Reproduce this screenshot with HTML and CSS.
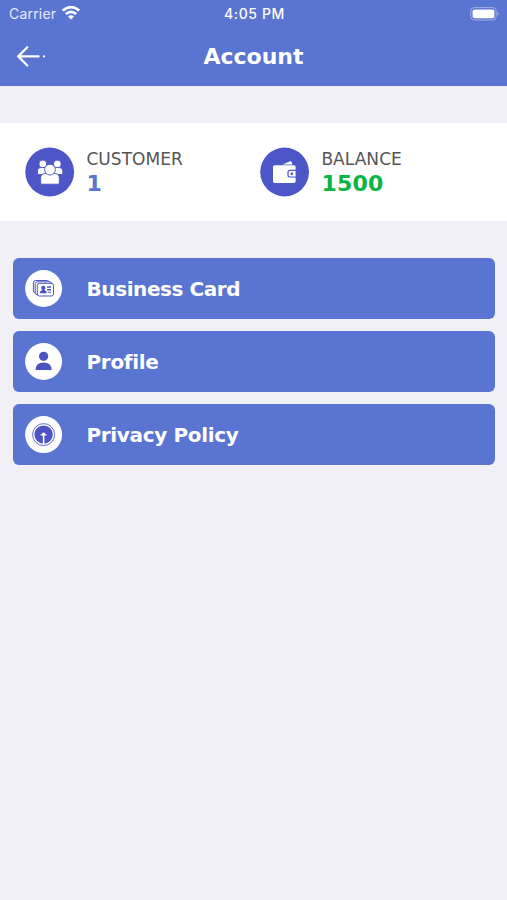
FILE: index.html
```html
<!DOCTYPE html>
<html lang="en">
<head>
<meta charset="utf-8">
<title>Account</title>
<link rel="stylesheet" href="styles.css">
</head>
<body>
<header class="header">
  <div class="status">
    <div class="carrier"><span>Carrier</span>
      <svg class="wifi" width="18" height="14" viewBox="0 0 18 14" fill="none" stroke="#fff" stroke-width="2.6"><path d="M.8 4.6Q9-2.4 17.2 4.6M3.8 8Q9 3.6 14.2 8"/><path d="M9 13.4L6 10.4Q9 8.2 12 10.4Z" fill="#fff" stroke="none"/></svg>
    </div>
    <span class="time">4:05 PM</span>
    <svg class="battery" width="30" height="14" viewBox="0 0 30 14"><rect x=".8" y=".6" width="25.4" height="12.4" rx="3.5" fill="none" stroke="#a3b0e7" stroke-width="1"/><rect x="2.6" y="2.4" width="21.8" height="8.8" rx="1.8" fill="#fff"/><path d="M27.6 4.8Q30 6.8 27.6 8.8Z" fill="#a3b0e7"/></svg>
  </div>
  <nav class="nav">
    <svg class="back" width="32" height="22" viewBox="0 0 32 22" fill="none" stroke="#fff" stroke-width="2.2" stroke-linecap="round" stroke-linejoin="round"><path d="M11.3 1.3L2.2 10.4L11.3 19.5M2.2 10.4H22.6"/><path d="M28 10.4H28.1"/></svg>
    <h1 class="title">Account</h1>
  </nav>
</header>
<main>
  <section class="stats">
    <div class="stat">
      <svg width="50" height="50" viewBox="0 0 50 50"><circle cx="24.7" cy="25" r="24.4" fill="#4c56c6"/><g fill="#fff" stroke="#4c56c6" stroke-width=".9"><circle cx="17.8" cy="17" r="3.9"/><circle cx="32.3" cy="17" r="3.9"/><path d="M12.5 27.5V24Q12.5 20.5 16 20.5H20Q22 21 22 24V27.5Z"/><path d="M28.3 27.5V24Q28.3 21 31 20.5H34.3Q37.8 20.5 37.8 24V27.5Z"/><path d="M15.7 36V31Q15.7 26.5 20 26.5H30Q34.3 26.5 34.3 31V36Q34.3 37.2 33 37.2H17Q15.7 37.2 15.7 36Z"/><circle cx="25" cy="22.6" r="5.4"/></g></svg>
      <div class="figures"><span class="label">CUSTOMER</span><strong class="value">1</strong></div>
    </div>
    <div class="stat">
      <svg width="50" height="50" viewBox="0 0 50 50"><circle cx="24.6" cy="25" r="24.4" fill="#4c56c6"/><path d="M22.5 17.4L30.2 14.2Q31.2 14 31.6 15L32.3 17.4Z" fill="#fff"/><rect x="13" y="18.3" width="22.6" height="17.6" rx="1.6" fill="#fff"/><path d="M36.2 23.4H30Q28 23.4 28 25.4V28Q28 30 30 30H36.2Z" fill="#fff" stroke="#4c56c6" stroke-width="1.2"/><circle cx="31.8" cy="26.8" r="1.4" fill="#4c56c6"/></svg>
      <div class="figures"><span class="label">BALANCE</span><strong class="value green">1500</strong></div>
    </div>
  </section>
  <section class="menu">
    <div class="item">
      <svg width="38" height="38" viewBox="0 0 38 38"><circle cx="18.6" cy="18.5" r="18.5" fill="#fff"/><g fill="#fff" stroke="#5159c4" stroke-width="1"><rect x="8.4" y="10.5" width="16" height="12.5" rx="2.2"/><rect x="10.2" y="11.8" width="16.5" height="13" rx="2"/><rect x="12.3" y="13.3" width="16.2" height="12.7" rx="2"/></g><g fill="#4850be"><circle cx="18.3" cy="17.9" r="2.1"/><path d="M14.7 23.2Q14.9 20.3 17.3 20H19.3Q21.7 20.3 21.9 23.2Z"/><path d="M22.1 16.3H26V17.7H22.1ZM22.1 19H26V20.4H22.1ZM22.8 21.7H26V22.8H22.8Z"/></g></svg>
      <span class="business">Business Card</span>
    </div>
    <div class="item">
      <svg width="38" height="38" viewBox="0 0 38 38"><circle cx="18.6" cy="18.5" r="18.5" fill="#fff"/><g fill="#4c52be"><circle cx="18.6" cy="13.3" r="4.6"/><path d="M10.6 26.9Q10.8 19.5 18.6 19.5Q26.4 19.5 26.6 26.9Z"/></g></svg>
      <span class="profile">Profile</span>
    </div>
    <div class="item">
      <svg width="38" height="38" viewBox="0 0 38 38"><circle cx="18.6" cy="18.6" r="18.5" fill="#fff"/><circle cx="18.6" cy="18.6" r="11" fill="none" stroke="#5159c4" stroke-width=".9"/><circle cx="18.6" cy="18.6" r="9.2" fill="#4c53c4"/><path d="M18.6 29V18" stroke="#fff" stroke-width="1.6"/><circle cx="18.6" cy="18.2" r="1.8" fill="#fff"/><path d="M15.5 18.9H21.7" stroke="#fff" stroke-width="1"/></svg>
      <span class="privacy">Privacy Policy</span>
    </div>
  </section>
</main>
</body>
</html>
```
FILE: styles.css
```css
* { box-sizing: border-box; }
body {
  margin: 0;
  min-height: 900px;
  background: #f0f0f6;
  font-family: "DejaVu Sans", Verdana, sans-serif;
}
svg { display: block; flex: none; }
.header { height: 86px; background: #5a74d1; color: #fff; }
.status {
  display: grid;
  grid-template-columns: 1fr auto 1fr;
  align-items: center;
  height: 27px;
  padding: 0 7px 0 9px;
  font: 14px Inter, sans-serif;
}
.carrier { display: flex; align-items: center; gap: 6px; color: #e8ecff; letter-spacing: .2px; }
.wifi { margin-bottom: 1px; }
.time { font-weight: 500; letter-spacing: .6px; }
.battery { justify-self: end; }
.nav {
  display: grid;
  grid-template-columns: 32px 1fr 32px;
  align-items: center;
  height: 59px;
  padding: 0 16px;
}
.title { margin: 0; font-size: 22px; line-height: 28px; text-align: center; }
.stats {
  display: grid;
  grid-template-columns: 235px 1fr;
  height: 98px;
  margin-top: 37px;
  padding-left: 25px;
  background: #fff;
}
.stat { display: flex; align-items: center; gap: 11.4px; }
.figures { display: flex; flex-direction: column; }
.label { color: #555; font-size: 17px; line-height: 22px; letter-spacing: .05px; }
.value { color: #5a74d1; font-size: 22px; line-height: 26px; padding-top: 1px; margin-bottom: -1px; letter-spacing: .2px; }
.green { color: #0bb545; }
.menu { display: grid; gap: 12.2px; padding: 37px 12.5px 0 13px; }
.item {
  display: flex;
  align-items: center;
  gap: 23.5px;
  height: 61px;
  padding-left: 12px;
  border-radius: 6px;
  background: #5a74d1;
  color: #fff;
  font-size: 20px;
  font-weight: bold;
}
.business { letter-spacing: -.42px; }
.profile { letter-spacing: -.3px; }
.privacy { letter-spacing: -.34px; }
```
